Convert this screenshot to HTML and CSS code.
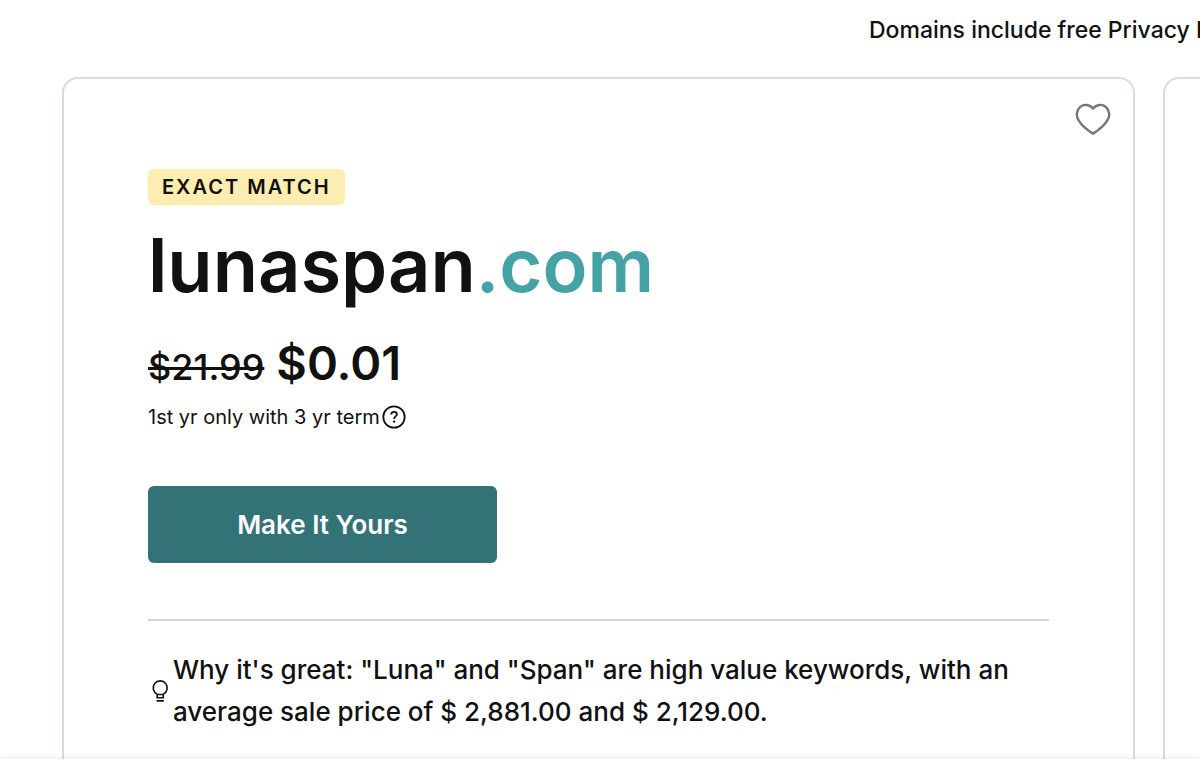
FILE: index.html
```html
<!DOCTYPE html>
<html lang="en">
<head>
<meta charset="utf-8">
<meta name="viewport" content="width=device-width, initial-scale=1">
<title>lunaspan.com</title>
<link rel="stylesheet" href="styles.css">
</head>
<body>
<div class="page">
  <p class="notice">Domains include free Privacy Protection forever.</p>
  <main class="results">
    <article class="card">
      <button class="favorite" type="button" aria-label="Save lunaspan.com">
        <svg viewBox="0 0 36 32" width="36" height="32" fill="none" stroke="currentColor" stroke-width="2.4" stroke-linejoin="round"><path d="M18 5.600C14.800 1.200 8.800.8 5.200 3.900C1.200 7.500.8 13 3.600 17.400C6.600 22.200 12.400 27.200 18 30.600C23.600 27.200 29.400 22.200 32.400 17.400C35.200 13 34.800 7.500 30.800 3.900C27.200.8 21.200 1.200 18 5.600Z"/></svg>
      </button>
      <span class="badge">EXACT MATCH</span>
      <h1 class="domain">lunaspan<span class="tld">.com</span></h1>
      <p class="prices"><s class="old-price">$21.99</s><strong class="price">$0.01</strong></p>
      <p class="term">1st yr only with 3 yr term
        <button class="help" type="button" aria-label="Pricing details">
          <svg viewBox="0 0 24 24" width="24" height="24" fill="none" stroke="currentColor" stroke-width="1.800"><circle cx="12" cy="12" r="10.700"/><path d="M9.200 9.600C9.200 7.800 10.400 6.900 12 6.900C13.700 6.900 14.900 7.900 14.900 9.400C14.900 11.300 12.100 11.500 12.100 13.900"/><circle cx="12.100" cy="16.600" r="1.200" fill="currentColor" stroke="none"/></svg>
        </button>
      </p>
      <button class="buy" type="button">Make It Yours</button>
      <div class="reason">
        <svg class="bulb" viewBox="0 0 18 24" width="18" height="24" fill="none" stroke="currentColor" stroke-width="1.600"><path d="M6.200 18.800V15.200A7 7 0 1 1 12.200 15.200V18.800Z M6.200 15.500H12.200 M5.600 21.900H12.800"/></svg>
        <p class="reason-text">Why it's great: "Luna" and "Span" are high value keywords, with an average sale price of $ 2,881.00 and $ 2,129.00.</p>
      </div>
    </article>
    <article class="card" aria-hidden="true"></article>
  </main>
</div>
<footer class="dock"></footer>
</body>
</html>
```
FILE: styles.css
```css
* {
  box-sizing: border-box;
}

body {
  margin: 0;
  height: 100vh;
  display: flex;
  flex-direction: column;
  overflow: hidden;
  background: #fff;
  color: #111;
  font-family: Inter, "Liberation Sans", sans-serif;
}

p,
h1 {
  margin: 0;
}

button {
  border: 0;
  padding: 0;
  color: inherit;
  font-family: inherit;
  background: none;
  cursor: pointer;
}

svg {
  display: block;
}

.page {
  flex: 1;
  min-height: 0;
  display: flex;
  flex-direction: column;
  overflow: hidden;
}

.notice {
  flex: none;
  padding: 12px 0 29px;
  padding-left: calc(100% - 331px);
  font-size: 23px;
  font-weight: 500;
  line-height: 36px;
  white-space: nowrap;
}

.results {
  flex: 1 0 auto;
  display: flex;
  gap: 28px;
  padding-left: 62px;
}

.card {
  position: relative;
  flex: 0 0 calc(100% - 65px);
  padding: 90px 84px 28px;
  border: 2px solid #d6dbe2;
  border-bottom: 0;
  border-radius: 16px 16px 0 0;
}

.favorite {
  position: absolute;
  top: 24px;
  right: 22px;
  color: #767676;
}

.badge {
  display: block;
  width: fit-content;
  padding: 0 14px;
  border-radius: 6px;
  background: #fdedb0;
  font-size: 20px;
  font-weight: 600;
  line-height: 36px;
  letter-spacing: 2px;
}

.domain {
  margin-top: 14px;
  font-size: 74px;
  font-weight: 600;
  line-height: 92px;
}

.tld {
  color: #45a2a5;
}

.prices {
  display: flex;
  align-items: baseline;
  gap: 12px;
  margin-top: 22px;
  line-height: 60px;
}

.old-price {
  font-size: 36px;
  font-weight: 500;
}

.price {
  font-size: 47px;
  font-weight: 600;
}

.term {
  display: flex;
  align-items: center;
  gap: 2px;
  margin-top: 5px;
  font-size: 20px;
  font-weight: 400;
  line-height: 30px;
}

.buy {
  display: block;
  width: 349px;
  max-width: 100%;
  margin-top: 54px;
  border-radius: 6px;
  background: #337377;
  color: #fff;
  font-size: 26px;
  font-weight: 600;
  line-height: 77px;
}

.reason {
  display: flex;
  align-items: center;
  gap: 4px;
  margin-top: 56px;
  padding-top: 28px;
  border-top: 2px solid #d2d4d6;
}

.bulb {
  flex: none;
  margin-left: 3px;
}

.reason-text {
  font-size: 26px;
  font-weight: 500;
  line-height: 42px;
}

.dock {
  position: relative;
  flex: none;
  height: 11px;
  background: #fff;
  box-shadow: 0 0 6px rgba(0, 0, 0, 0.12);
}
```
